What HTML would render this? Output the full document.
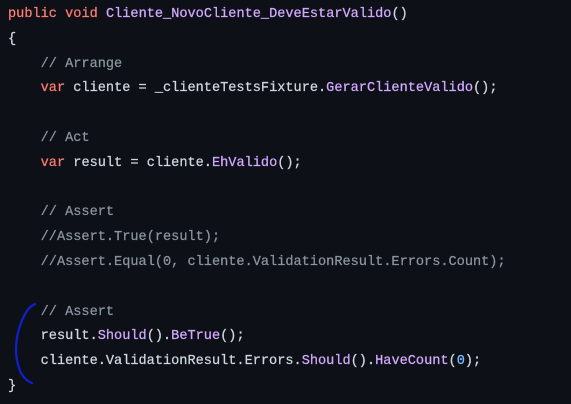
<!DOCTYPE html>
<html><head><style>
html,body{margin:0;padding:0;background:#0d1117;width:571px;height:404px;overflow:hidden}
pre{margin:0;position:absolute;left:8px;top:3px;font-family:"Liberation Mono",monospace;font-size:13.6px;line-height:24.8px;color:#d0d7de;-webkit-text-stroke:0.25px currentColor}
.k{color:#ff7b72}.f{color:#d2a8ff}.c{color:#8b949e}.n{color:#79c0ff}
</style></head><body>
<pre><span class="k">public</span> <span class="k">void</span> <span class="f">Cliente_NovoCliente_DeveEstarValido</span>()
{
    <span class="c">// Arrange</span>
    <span class="k">var</span> cliente = _clienteTestsFixture.<span class="f">GerarClienteValido</span>();

    <span class="c">// Act</span>
    <span class="k">var</span> result = cliente.<span class="f">EhValido</span>();

    <span class="c">// Assert</span>
    <span class="c">//Assert.True(result);</span>
    <span class="c">//Assert.Equal(0, cliente.ValidationResult.Errors.Count);</span>

    <span class="c">// Assert</span>
    result.<span class="f">Should</span>().<span class="f">BeTrue</span>();
    cliente.ValidationResult.Errors.<span class="f">Should</span>().<span class="f">HaveCount</span>(<span class="n">0</span>);
}</pre>
<svg width="571" height="404" style="position:absolute;left:0;top:0">
<path d="M35 304 C30 306 27 310 24 316 C18 328 14 345 17 360 C19 372 24 380 32 383" stroke="#1020d0" stroke-width="2.2" fill="none" stroke-linecap="round"/>
</svg>
</body></html>
